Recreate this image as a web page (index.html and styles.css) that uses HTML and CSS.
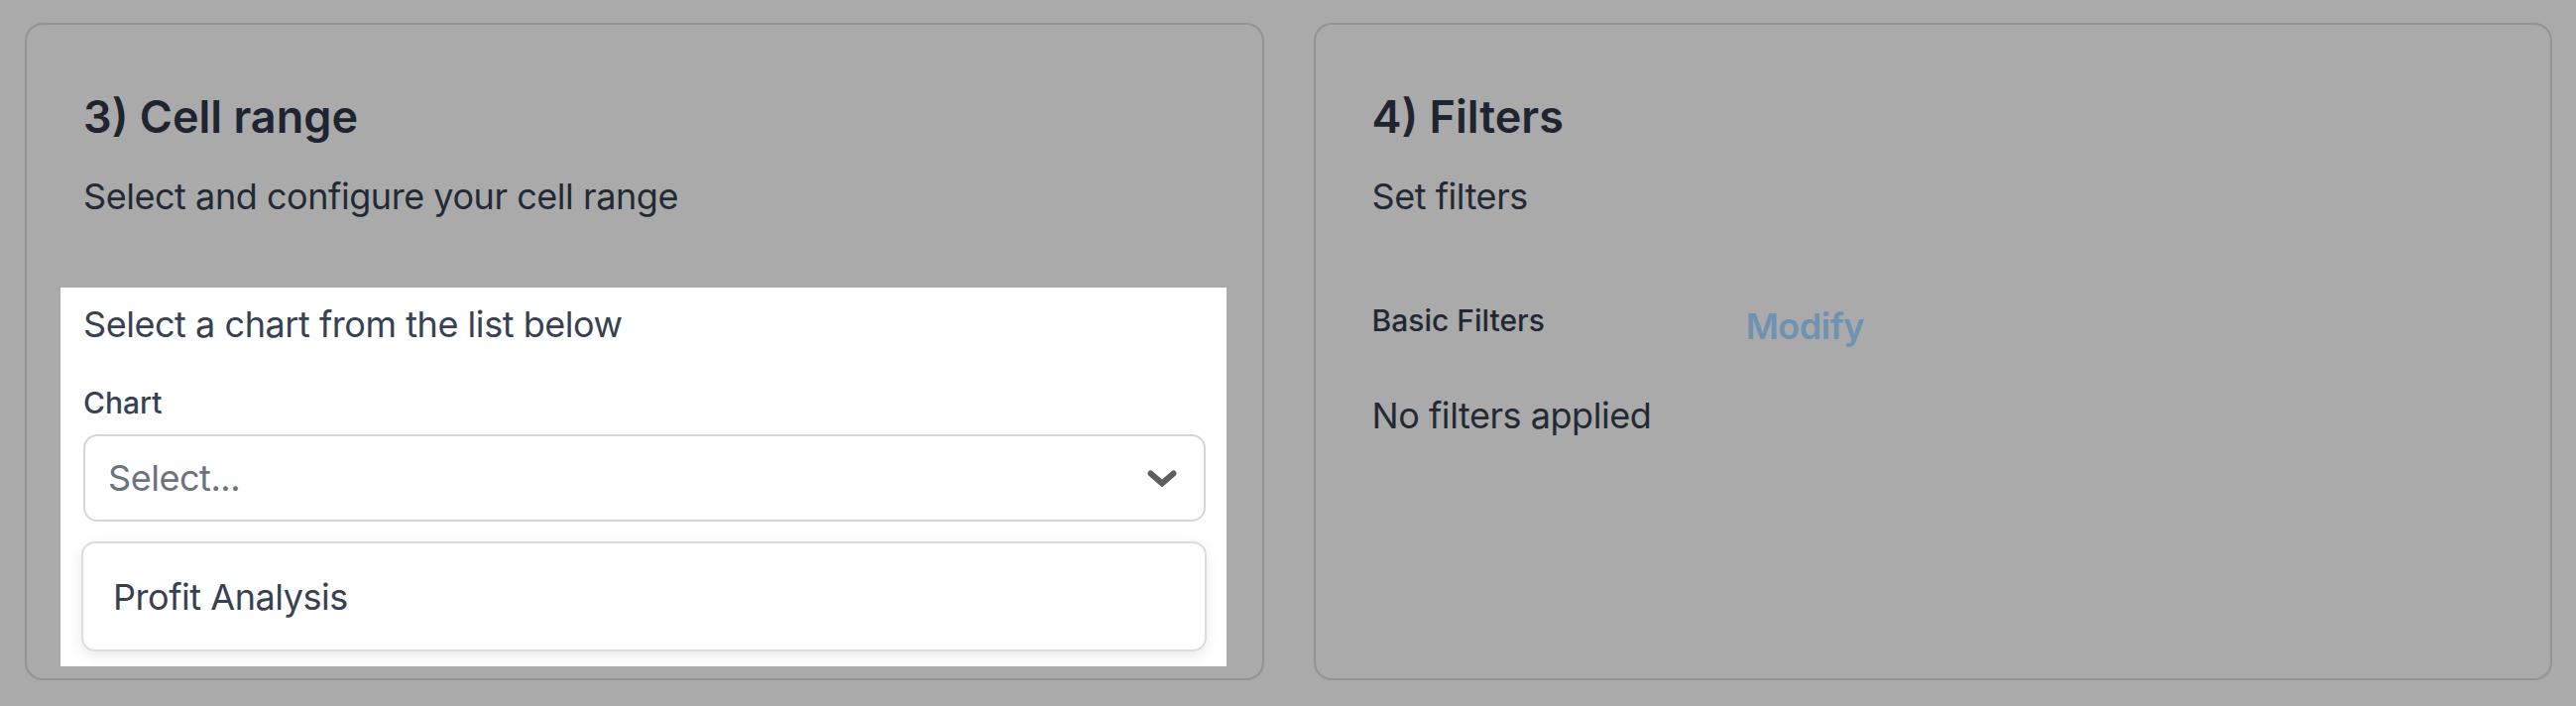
FILE: index.html
```html
<!DOCTYPE html>
<html lang="en">
<head>
<meta charset="utf-8">
<title>Chart setup</title>
<link rel="stylesheet" href="styles.css">
</head>
<body>
<main class="page">
  <section class="card">
    <h2 class="card-title">3) Cell range</h2>
    <p class="card-sub">Select and configure your cell range</p>
    <div class="spotlight">
      <p class="hint">Select a chart from the list below</p>
      <label class="field-label">Chart</label>
      <div class="select">
        <span class="placeholder">Select...</span>
        <svg class="chevron" viewBox="0 0 30 17" width="30" height="17" aria-hidden="true">
          <polyline points="3.5,3.5 15,13.5 26.5,3.5" fill="none" stroke="#5e5e5e" stroke-width="6" stroke-linecap="round" stroke-linejoin="miter"/>
        </svg>
      </div>
      <ul class="menu">
        <li class="option">Profit Analysis</li>
      </ul>
    </div>
  </section>
  <section class="card">
    <h2 class="card-title">4) Filters</h2>
    <p class="card-sub">Set filters</p>
    <div class="filter-row">
      <span class="field-label dim">Basic Filters</span>
      <a class="modify">Modify</a>
    </div>
    <p class="no-filters">No filters applied</p>
  </section>
</main>
</body>
</html>
```

FILE: styles.css
```css
* { box-sizing: border-box; }

html, body {
  margin: 0;
  padding: 0;
  background: #aaaaaa;
}

body {
  font-family: "Inter", "Noto Sans", sans-serif;
  color: #232a35;
}

.page {
  display: grid;
  grid-template-columns: 1fr 1fr;
  column-gap: 50px;
  padding: 23px 24px 26px 25px;
  height: 712px;
}

.card {
  height: 663px;
  border: 2px solid #939393;
  border-radius: 18px;
  padding: 61px 57px 0 57px;
}

.card-title {
  margin: 0;
  font-size: 45px;
  line-height: 63px;
  font-weight: 600;
  color: #1e2530;
}

.card-sub {
  margin: 22px 0 0 0;
  font-size: 36px;
  line-height: 54px;
  letter-spacing: -0.45px;
  color: #232a35;
}

.spotlight {
  margin: 65px -21.5px 0 -23px;
  padding: 10px 21.5px 15px 23px;
  background: #ffffff;
}

.hint {
  margin: 0;
  font-size: 36px;
  line-height: 54px;
  letter-spacing: -0.45px;
  color: #374151;
}

.field-label {
  display: block;
  margin-top: 29px;
  font-size: 30px;
  line-height: 47px;
  font-weight: 500;
  color: #374151;
}

.select {
  margin-top: 8px;
  height: 88px;
  border: 2px solid #d5d6d8;
  border-radius: 14px;
  background: #fefefe;
  display: flex;
  align-items: center;
  justify-content: space-between;
  padding: 0 27px 0 23px;
}

.placeholder {
  font-size: 36px;
  line-height: 54px;
  letter-spacing: -0.45px;
  color: #6b7280;
}

.chevron {
  display: block;
  flex: none;
}

.menu {
  list-style: none;
  margin: 20px -1px 0 -2px;
  padding: 0;
  height: 111px;
  border: 2px solid #dcdcde;
  border-radius: 14px;
  background: #ffffff;
  box-shadow: 0 4px 14px rgba(0, 0, 0, 0.09);
  display: flex;
  align-items: center;
}

.option {
  padding-left: 30px;
  font-size: 36px;
  line-height: 54px;
  letter-spacing: -0.45px;
  color: #374151;
}

.filter-row {
  margin-top: 75px;
  display: grid;
  grid-template-columns: 1fr 1fr 1fr;
  align-items: start;
}

.filter-row .field-label {
  margin-top: 0;
}

.field-label.dim {
  color: #222833;
}

.modify {
  margin-top: 2px;
  font-size: 36px;
  line-height: 54px;
  letter-spacing: -0.5px;
  font-weight: 600;
  color: #6e92b2;
  cursor: pointer;
}

.no-filters {
  margin: 36px 0 0 0;
  font-size: 36px;
  line-height: 54px;
  letter-spacing: -0.45px;
  color: #232a35;
}
```
